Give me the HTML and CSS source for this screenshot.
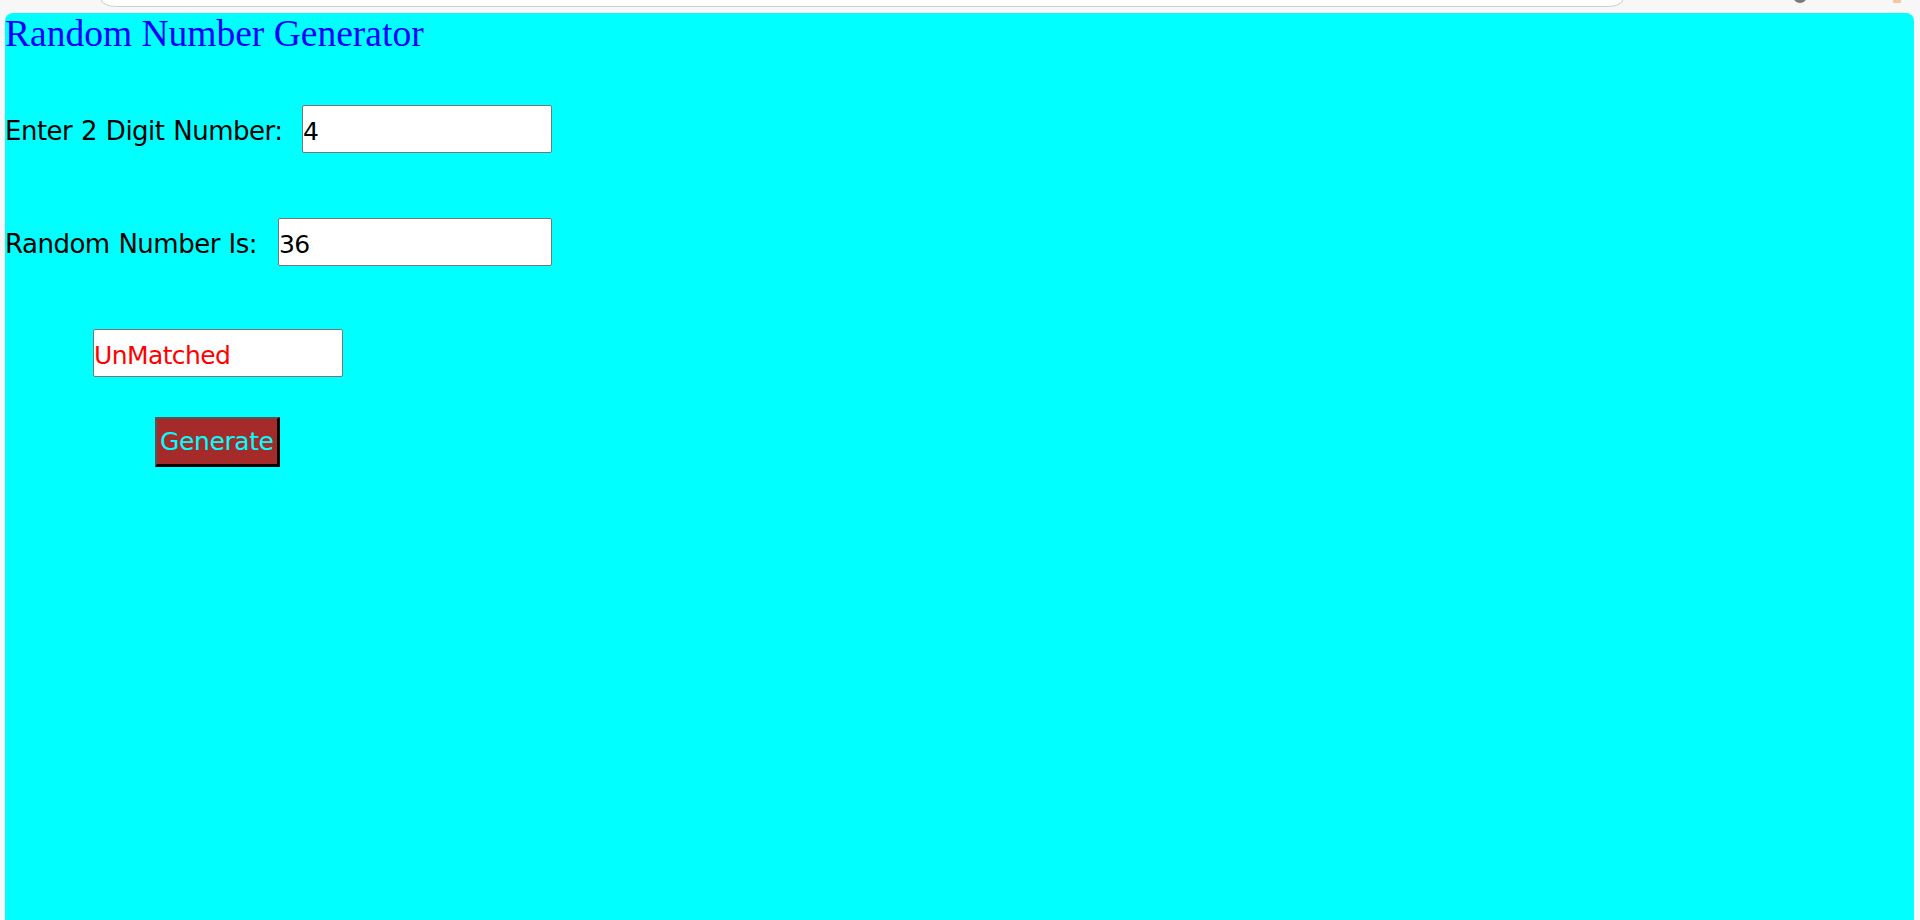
FILE: index.html
```html
<!DOCTYPE html>
<html lang="en">
<head>
<meta charset="utf-8">
<title>Random Number Generator</title>
<link rel="stylesheet" href="styles.css">
</head>
<body>
<div class="chrome">
  <div class="addressbar"></div>
  <span class="chrome-dot"></span>
  <span class="chrome-ext"></span>
</div>
<main class="page">
  <h1 class="title">Random Number Generator</h1>
  <div class="row row-enter">
    <label class="label label-enter" for="num">Enter 2 Digit Number:</label>
    <input id="num" class="field field-short" type="text" value="4">
  </div>
  <div class="row row-random">
    <label class="label label-random" for="rnd">Random Number Is:</label>
    <input id="rnd" class="field field-long" type="text" value="36">
  </div>
  <div class="row row-result">
    <input class="field field-short field-result" type="text" value="UnMatched">
  </div>
  <div class="row row-action">
    <button class="generate" type="button">Generate</button>
  </div>
</main>
</body>
</html>
```
FILE: styles.css
```css
html, body {
  margin: 0;
  padding: 0;
}

body {
  background: #f7f7f7;
  overflow: hidden;
  font-family: "DejaVu Sans", Verdana, sans-serif;
}

.chrome {
  height: 13px;
  display: flex;
  align-items: flex-start;
}

.addressbar {
  margin-left: 101px;
  width: 1522px;
  height: 7px;
  box-sizing: border-box;
  background: #ffffff;
  border: 1px solid #cfcfcf;
  border-top: 0;
  border-radius: 0 0 18px 18px / 0 0 8px 8px;
}

.chrome-dot {
  margin-left: 170px;
  margin-top: -11px;
  width: 14px;
  height: 14px;
  border-radius: 50%;
  background: #7a7a7a;
}

.chrome-ext {
  margin-left: 86px;
  width: 8px;
  height: 3px;
  background: #f5c6a0;
}

.page {
  margin: 0 6px 0 5px;
  height: 907px;
  background: #00ffff;
  border-radius: 8px 8px 0 0;
}

.title {
  margin: 0;
  font-family: "Liberation Serif", "Times New Roman", serif;
  font-size: 37.5px;
  font-weight: normal;
  line-height: 42px;
  color: #0000ff;
}

.row {
  display: flex;
  align-items: baseline;
}

.row-enter {
  margin-top: 50px;
}

.row-random {
  margin-top: 65px;
}

.row-result {
  margin-top: 63px;
  padding-left: 88px;
}

.row-action {
  margin-top: 40px;
  padding-left: 150px;
}

.label {
  flex: none;
  font-size: 26px;
  letter-spacing: -0.5px;
  word-spacing: 1px;
  color: #000000;
}

.label-enter {
  width: 297px;
}

.label-random {
  width: 273px;
}

.field {
  box-sizing: border-box;
  height: 48px;
  margin: 0;
  padding: 4px 2px 0 0;
  border: 1px solid #767676;
  border-radius: 2px;
  background: #ffffff;
  font-family: "DejaVu Sans", Verdana, sans-serif;
  font-size: 25px;
  letter-spacing: -0.6px;
  color: #000000;
  outline: none;
}

.field-short {
  width: 250px;
}

.field-long {
  width: 274px;
}

.field-result {
  color: #ff0000;
}

.generate {
  box-sizing: border-box;
  width: 125px;
  height: 50px;
  margin: 0;
  padding: 0 5px 0 3px;
  border-style: solid;
  border-width: 2px 3px 3px 2px;
  border-color: #565656 #000000 #000000 #565656;
  border-radius: 0;
  background: #a52a2a;
  color: #00ffff;
  font-family: "DejaVu Sans", Verdana, sans-serif;
  font-size: 25px;
  letter-spacing: -0.4px;
  line-height: normal;
  text-align: left;
}
```
